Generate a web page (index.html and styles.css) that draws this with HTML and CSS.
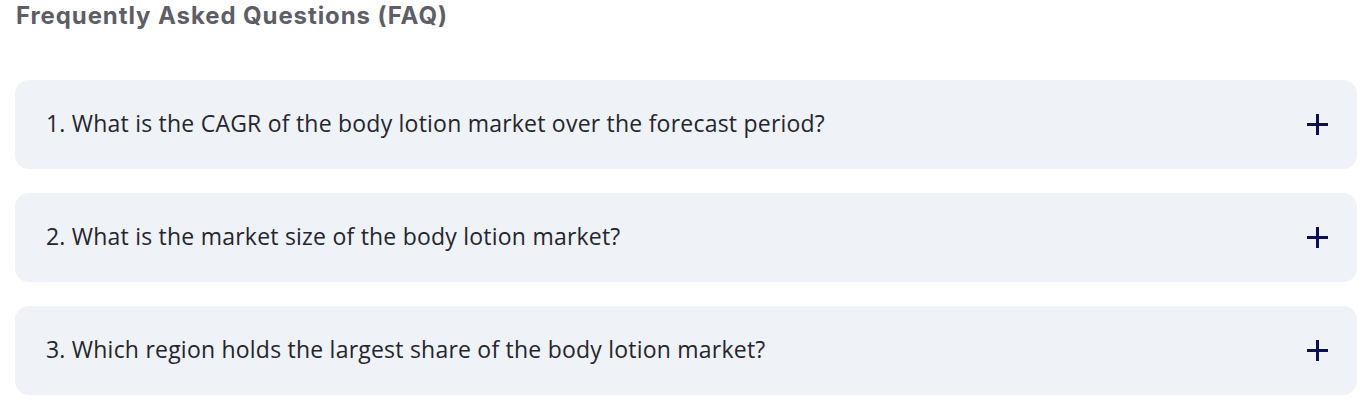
FILE: index.html
```html
<!DOCTYPE html>
<html lang="en">
<head>
<meta charset="utf-8">
<title>FAQ</title>
<link rel="stylesheet" href="styles.css">
</head>
<body>
<section class="faq">
  <h2 class="faq-title">Frequently Asked Questions (FAQ)</h2>
  <div class="faq-list">
    <div class="faq-item">
      <span class="faq-q">1. What is the CAGR of the body lotion market over the forecast period?</span>
      <svg class="faq-icon" width="21" height="21" viewBox="0 0 21 21" aria-hidden="true"><path d="M10.5 0V21M0 10.5H21" stroke="currentColor" stroke-width="3" fill="none"/></svg>
    </div>
    <div class="faq-item">
      <span class="faq-q">2. What is the market size of the body lotion market?</span>
      <svg class="faq-icon" width="21" height="21" viewBox="0 0 21 21" aria-hidden="true"><path d="M10.5 0V21M0 10.5H21" stroke="currentColor" stroke-width="3" fill="none"/></svg>
    </div>
    <div class="faq-item">
      <span class="faq-q">3. Which region holds the largest share of the body lotion market?</span>
      <svg class="faq-icon" width="21" height="21" viewBox="0 0 21 21" aria-hidden="true"><path d="M10.5 0V21M0 10.5H21" stroke="currentColor" stroke-width="3" fill="none"/></svg>
    </div>
  </div>
</section>
</body>
</html>
```
FILE: styles.css
```css
html, body {
  margin: 0;
  padding: 0;
  background: #ffffff;
}
.faq {
  padding: 0 14px 0 15px;
}
.faq-title {
  margin: 0;
  padding-left: 1px;
  height: 38px;
  line-height: 32px;
  font-family: Inter, "Liberation Sans", sans-serif;
  font-weight: 700;
  font-size: 24px;
  letter-spacing: 0.9px;
  color: #5e5e66;
}
.faq-list {
  margin-top: 42px;
  display: flex;
  flex-direction: column;
  gap: 24px;
}
.faq-item {
  height: 89px;
  box-sizing: border-box;
  padding: 0 29px 0 31px;
  background: #eff2f7;
  border-radius: 14px;
  display: flex;
  align-items: center;
  justify-content: space-between;
}
.faq-q {
  font-family: "Open Sans", "Liberation Sans", sans-serif;
  font-size: 23px;
  letter-spacing: 0.22px;
  line-height: 30px;
  margin-bottom: 4px;
  color: #25252f;
}
.faq-icon {
  color: #0b1150;
  flex: none;
}
```
